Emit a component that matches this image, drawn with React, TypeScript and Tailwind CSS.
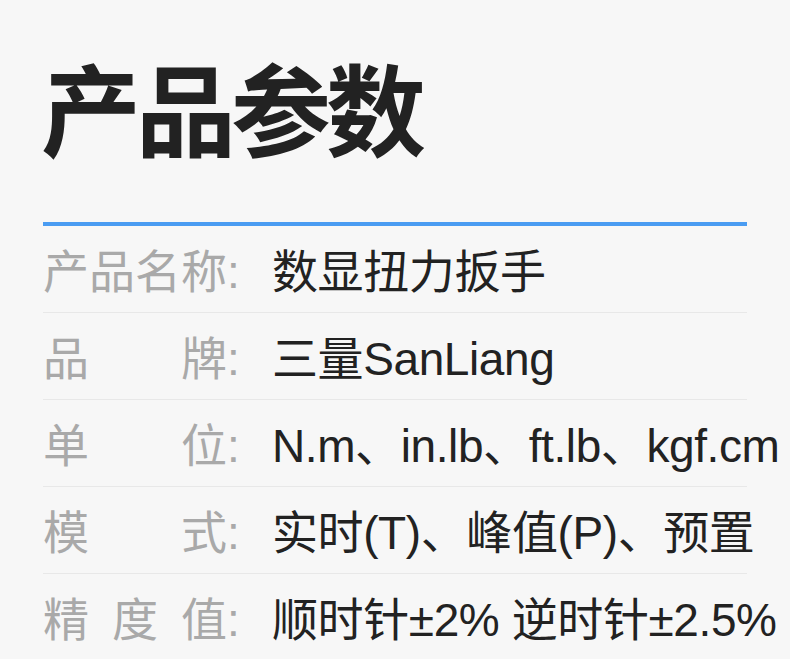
const rows: { label: string[]; value: string }[] = [
  { label: ['产', '品', '名', '称'], value: '数显扭力扳手' },
  { label: ['品', '牌'], value: '三量SanLiang' },
  { label: ['单', '位'], value: 'N.m、in.lb、ft.lb、kgf.cm' },
  { label: ['模', '式'], value: '实时(T)、峰值(P)、预置' },
  { label: ['精', '度', '值'], value: '顺时针±2% 逆时针±2.5%' },
]

export default function App() {
  return (
    <div
      className="w-[790px] h-[659px] overflow-hidden bg-[#f7f7f7] pt-[64px] pl-[43px]"
      style={{ fontFamily: '"Liberation Sans", "Noto Sans CJK SC", sans-serif' }}
    >
      <h1 className="h-[99px] text-[100px] leading-none font-bold text-[#222] tracking-[-5px] -ml-[2px]">
        产品参数
      </h1>
      <div className="mt-[59px] w-[704px] h-[4px] bg-[#4a9cf2]" />
      {rows.map((r) => (
        <div
          key={r.value}
          className="flex items-center w-[704px] h-[87px] pt-[5px] border-b border-[#e8e8e8] whitespace-nowrap"
        >
          <div className="flex shrink-0 justify-between w-[184px] text-[46px] leading-none text-[#a9a9a9]">
            {r.label.map((c, i) => (
              <span key={i}>{c}</span>
            ))}
          </div>
          <span className="shrink-0 w-[45px] text-[46px] leading-none text-[#a9a9a9]">:</span>
          <span className="shrink-0 text-[46px] leading-none text-[#222] tracking-[-0.4px]">{r.value}</span>
        </div>
      ))}
    </div>
  )
}
